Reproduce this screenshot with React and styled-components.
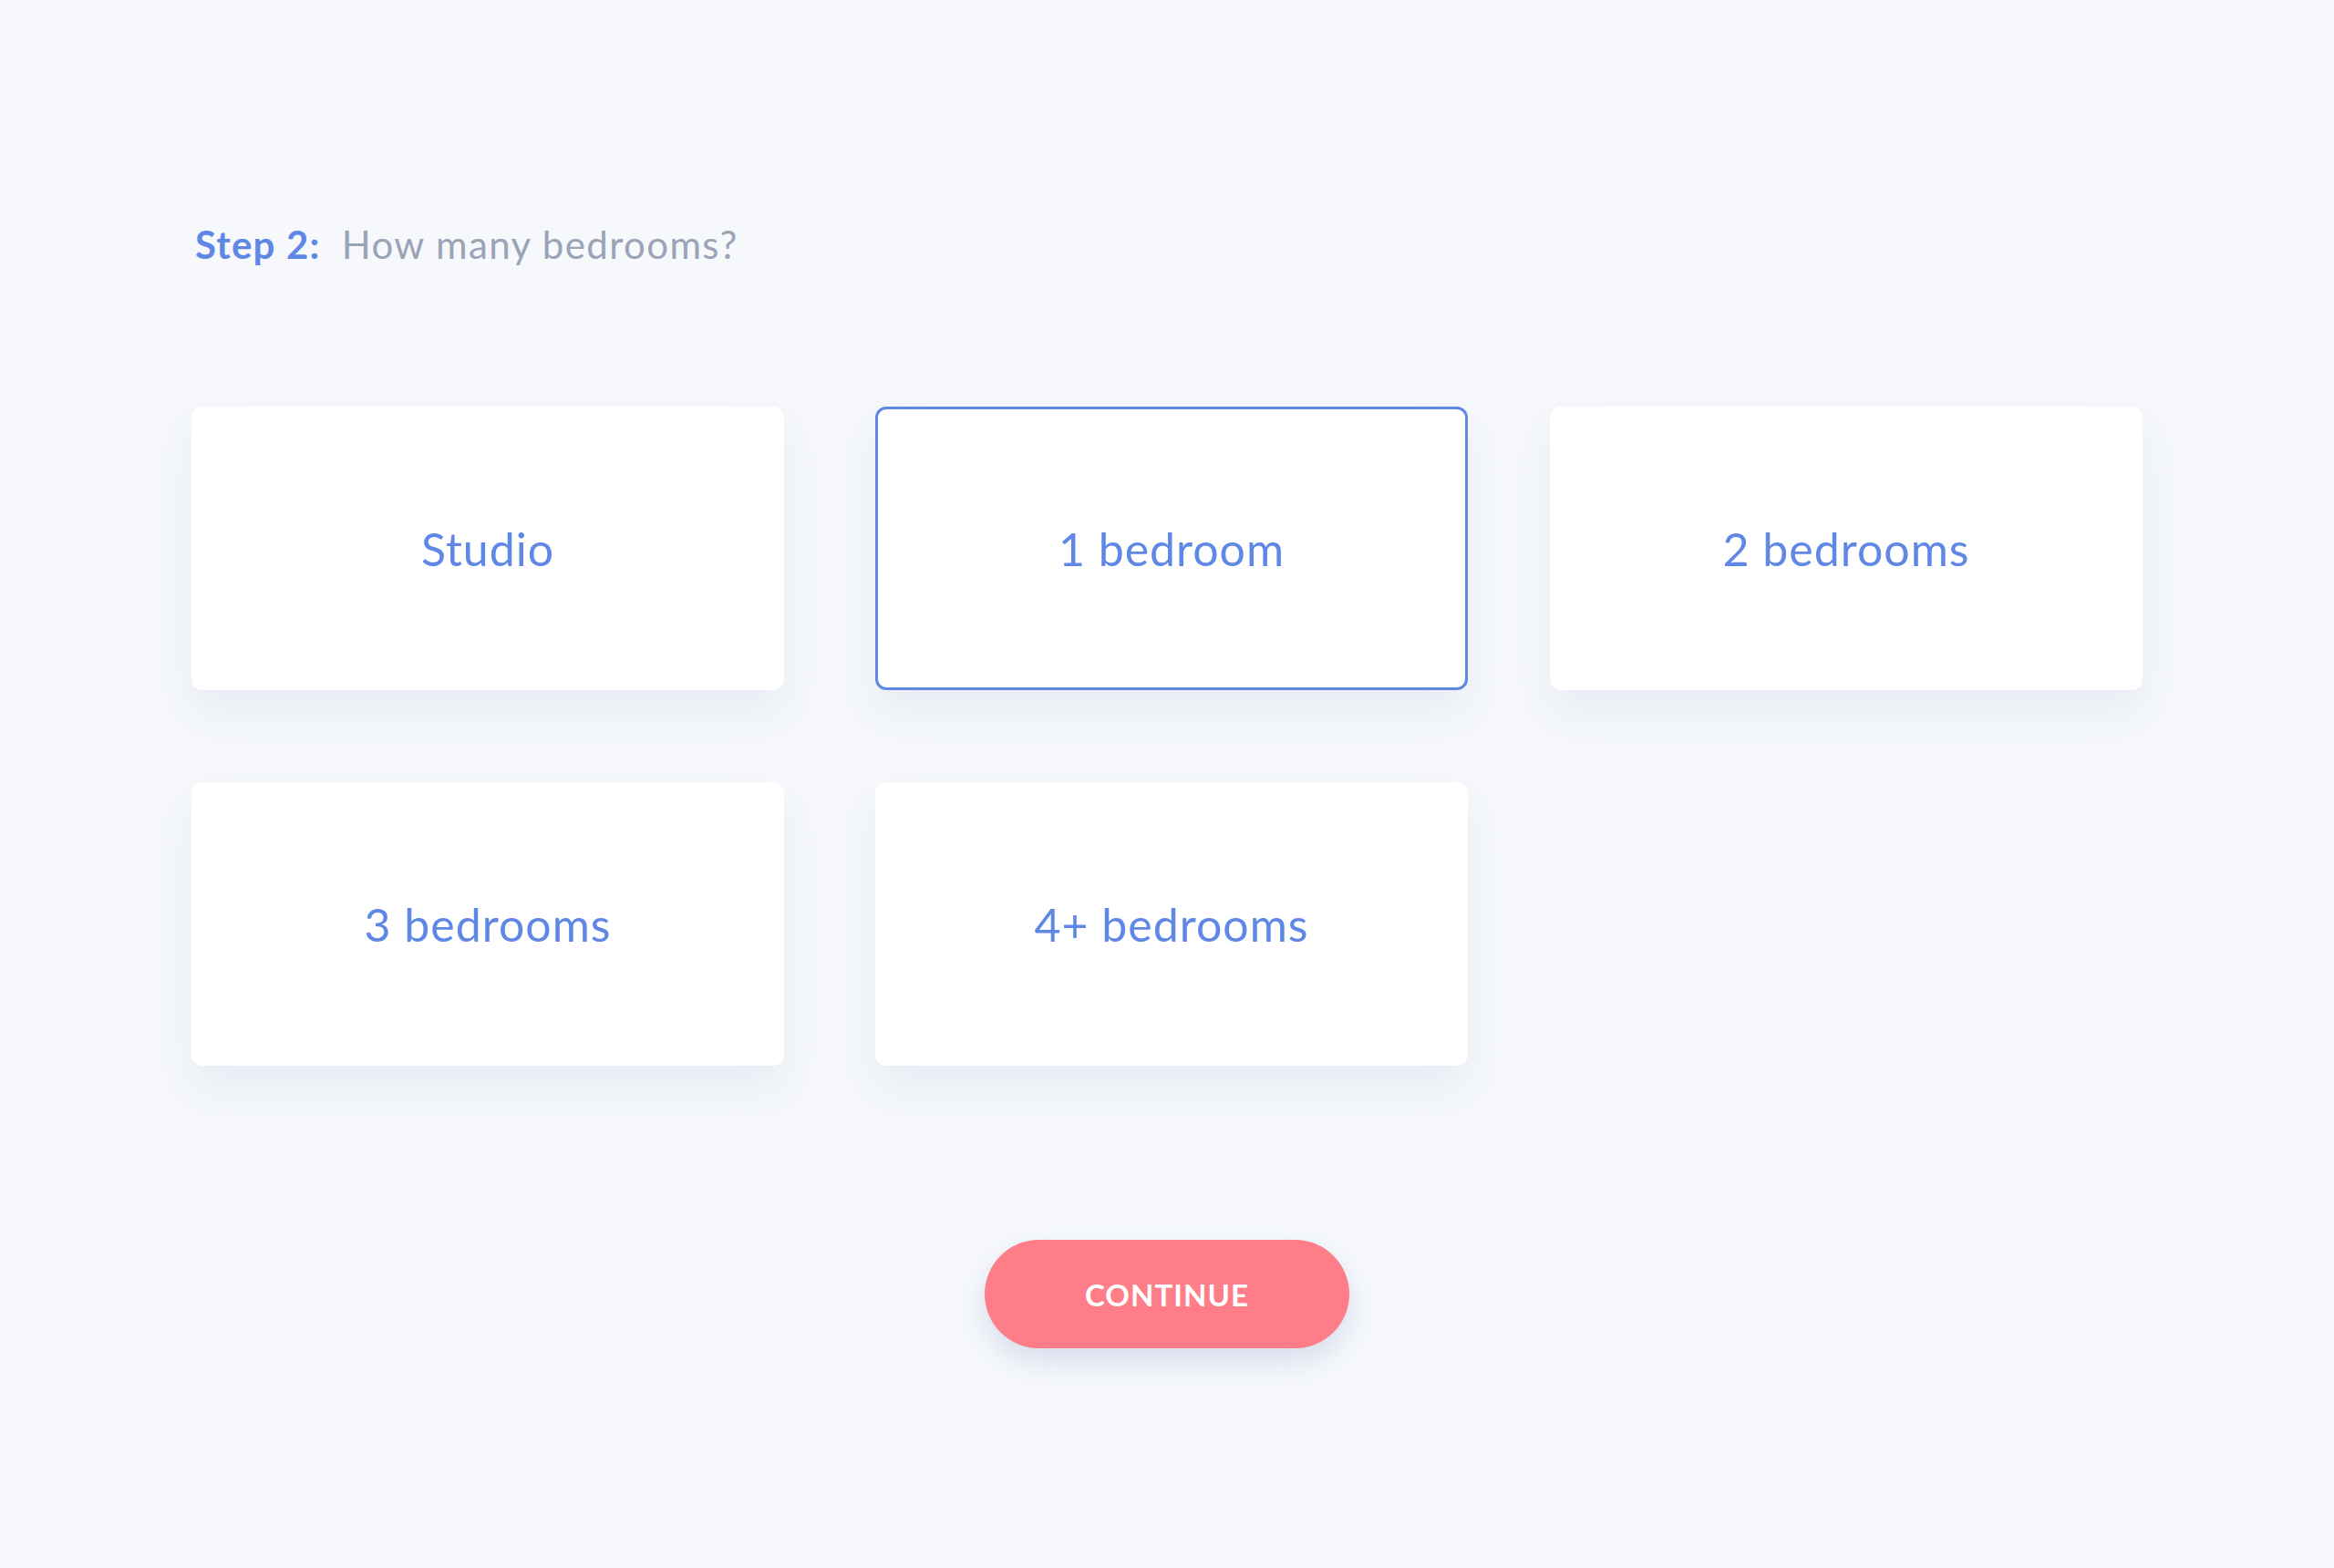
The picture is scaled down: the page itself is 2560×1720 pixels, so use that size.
import React, { useState } from 'react';
import styled, { createGlobalStyle } from 'styled-components';

const GlobalStyle = createGlobalStyle`
  html, body {
    margin: 0;
    padding: 0;
    background: #f6f8fb;
  }
  body {
    font-family: Lato, "Open Sans", sans-serif;
  }
`;

const Page = styled.div`
  width: 100%;
  min-height: 1720px;
  display: flex;
  justify-content: center;
  box-sizing: border-box;
  padding-top: 243px;
`;

const Content = styled.div`
  width: 2140px;
  display: flex;
  flex-direction: column;
`;

const Title = styled.div`
  font-size: 42px;
  line-height: 50px;
  padding-left: 4px;
  color: #9ba3b6;
  letter-spacing: 1.4px;
`;

const StepLabel = styled.span`
  color: #5f87e5;
  font-weight: 700;
  letter-spacing: 1.2px;
  margin-right: 23px;
`;

// the design's gutters are 100px then 90px
const Options = styled.div`
  display: grid;
  grid-template-columns: 750px 740px 650px;
  row-gap: 101px;
  margin-top: 153px;
`;

const Option = styled.button`
  width: 650px;
  height: 311px;
  box-sizing: border-box;
  display: flex;
  align-items: center;
  justify-content: center;
  background: #ffffff;
  border: 3px solid ${p => (p.selected ? '#5f87e5' : 'transparent')};
  border-radius: 12px;
  box-shadow: 0 24px 48px rgba(200, 208, 228, 0.3);
  font-family: Lato, "Open Sans", sans-serif;
  font-size: 50px;
  color: #5f87e5;
  letter-spacing: 1px;
  cursor: pointer;
  padding: 0;
`;

const Footer = styled.div`
  display: flex;
  justify-content: center;
  margin-top: 191px;
`;

const ContinueButton = styled.button`
  width: 400px;
  height: 119px;
  border: none;
  border-radius: 60px;
  background: #ff7d89;
  box-shadow: 0 14px 30px rgba(190, 200, 225, 0.55);
  color: #ffffff;
  font-family: Lato, "Open Sans", sans-serif;
  font-weight: 700;
  font-size: 33px;
  letter-spacing: 1px;
  cursor: pointer;
`;

const options = ['Studio', '1 bedroom', '2 bedrooms', '3 bedrooms', '4+ bedrooms'];

export default function App() {
  const [selected, setSelected] = useState(1);
  return (
    <Page>
      <GlobalStyle />
      <Content>
        <Title>
          <StepLabel>Step 2:</StepLabel>How many bedrooms?
        </Title>
        <Options>
          {options.map((label, index) => (
            <Option
              key={label}
              selected={selected === index}
              onClick={() => setSelected(index)}
            >
              {label}
            </Option>
          ))}
        </Options>
        <Footer>
          <ContinueButton>CONTINUE</ContinueButton>
        </Footer>
      </Content>
    </Page>
  );
}
